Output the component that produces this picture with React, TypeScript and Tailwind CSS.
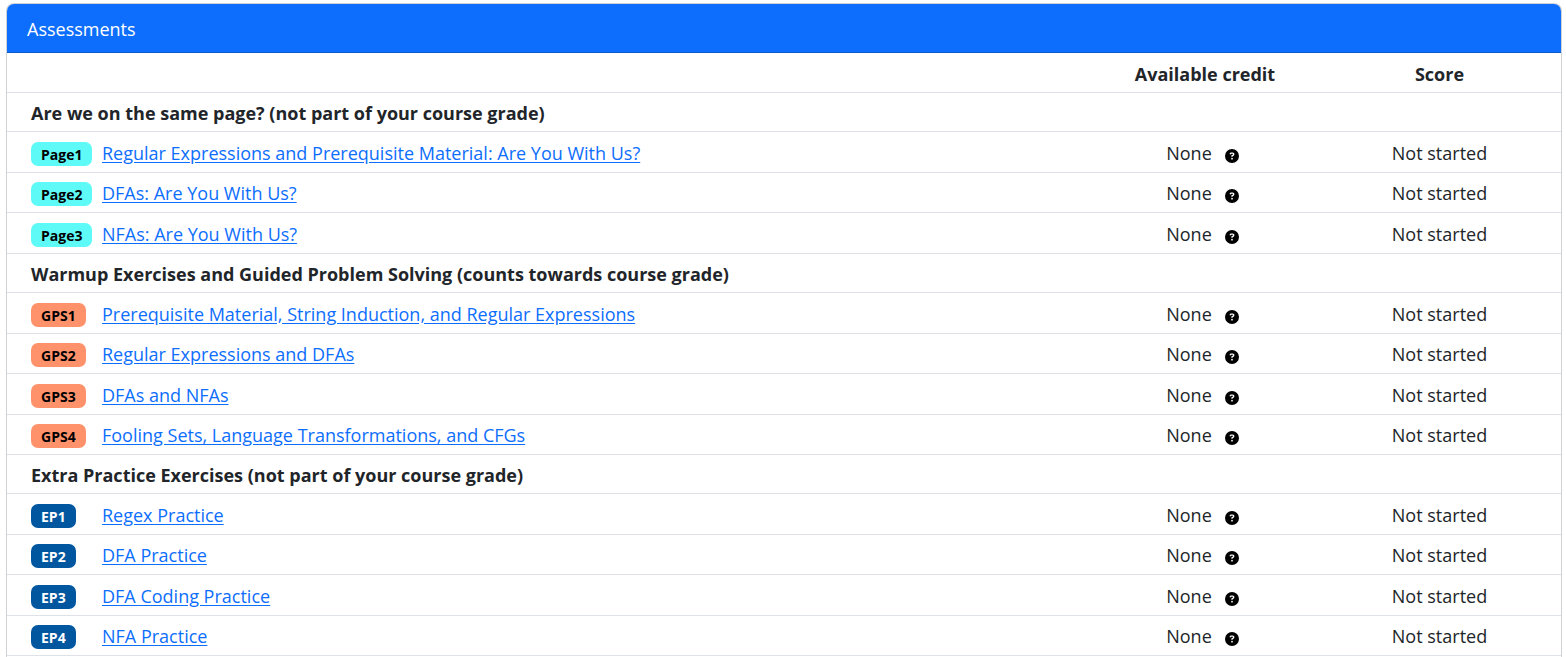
import { FaCircleQuestion } from "react-icons/fa6";

type Assessment = { label: string; title: string };
type Group = { heading: string; badge: string; items: Assessment[] };

const groups: Group[] = [
  {
    heading: "Are we on the same page? (not part of your course grade)",
    badge: "bg-[#5efaf7] text-black",
    items: [
      { label: "Page1", title: "Regular Expressions and Prerequisite Material: Are You With Us?" },
      { label: "Page2", title: "DFAs: Are You With Us?" },
      { label: "Page3", title: "NFAs: Are You With Us?" },
    ],
  },
  {
    heading: "Warmup Exercises and Guided Problem Solving (counts towards course grade)",
    badge: "bg-[#ff926b] text-black",
    items: [
      { label: "GPS1", title: "Prerequisite Material, String Induction, and Regular Expressions" },
      { label: "GPS2", title: "Regular Expressions and DFAs" },
      { label: "GPS3", title: "DFAs and NFAs" },
      { label: "GPS4", title: "Fooling Sets, Language Transformations, and CFGs" },
    ],
  },
  {
    heading: "Extra Practice Exercises (not part of your course grade)",
    badge: "bg-[#0057a0] text-white",
    items: [
      { label: "EP1", title: "Regex Practice" },
      { label: "EP2", title: "DFA Practice" },
      { label: "EP3", title: "DFA Coding Practice" },
      { label: "EP4", title: "NFA Practice" },
    ],
  },
];

function AssessmentRow({ item, badge }: { item: Assessment; badge: string }) {
  return (
    <tr className="border-b border-[#dee2e6] odd:h-10 even:h-[41px]">
      <td className="pt-1 pl-6">
        <span
          className={`flex h-6 w-fit items-center rounded-[7px] px-2.5 pt-0.5 text-sm font-bold ${badge}`}
        >
          {item.label}
        </span>
      </td>
      <td className="pt-0.5">
        <a href="#" className="text-[#0d6efd] underline underline-offset-2">
          {item.title}
        </a>
      </td>
      <td className="pt-0.5">
        <div className="flex items-center justify-center">
          None
          <button type="button" aria-label="Credit details" className="mt-1.5 ml-1 pr-[5px] pl-[9px] text-black">
            <FaCircleQuestion className="size-3.5" aria-hidden="true" />
          </button>
        </div>
      </td>
      <td className="pt-0.5 text-center">Not started</td>
    </tr>
  );
}

export default function App() {
  return (
    <main className="px-1.5 pt-[3px] pr-1 font-['Open_Sans','Noto_Sans',sans-serif] text-lg leading-7 text-[#212529]">
      <section className="overflow-hidden rounded-t-lg border border-b-0 border-[#d0d3d6] bg-white pb-px">
        <h1 className="border-b border-[#0b5cd3] bg-[#0d6efd] px-5 pt-[11px] pb-[9px] text-white">
          Assessments
        </h1>
        <table className="w-full table-fixed border-collapse">
          <colgroup>
            <col className="w-[95px]" />
            <col />
            <col className="w-[226px]" />
            <col className="w-[243px]" />
          </colgroup>
          <thead>
            <tr className="h-[39px] border-b border-[#dee2e6]">
              <td colSpan={2} />
              <th className="pt-1 font-bold">Available credit</th>
              <th className="pt-1 font-bold">Score</th>
            </tr>
          </thead>
          {groups.map((group) => (
            <tbody key={group.heading}>
              <tr className="h-[39px] border-b border-[#dee2e6]">
                <th colSpan={4} className="pt-0.5 pl-6 text-left font-bold">
                  {group.heading}
                </th>
              </tr>
              {group.items.map((item) => (
                <AssessmentRow key={item.label} item={item} badge={group.badge} />
              ))}
            </tbody>
          ))}
        </table>
      </section>
    </main>
  );
}
